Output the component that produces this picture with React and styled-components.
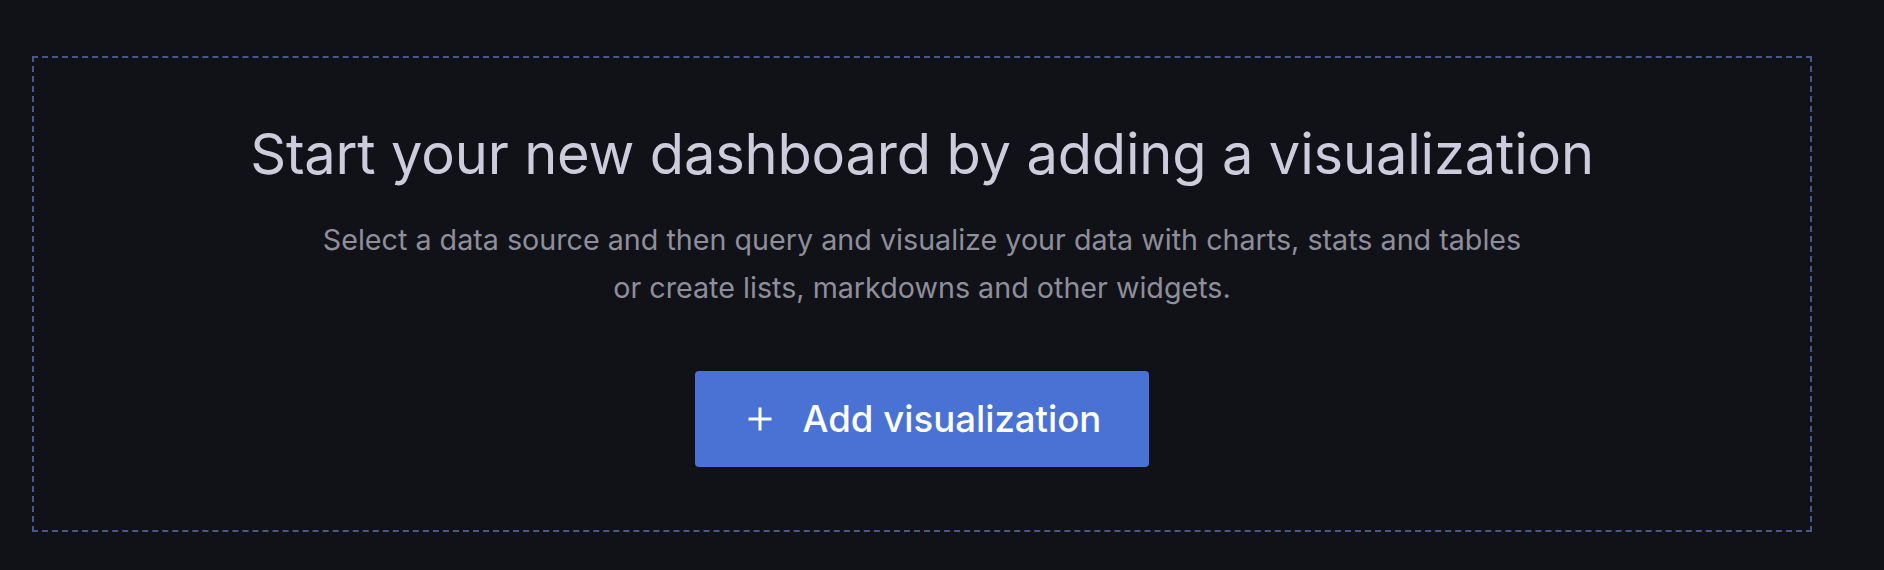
import React from 'react';
import styled, { createGlobalStyle } from 'styled-components';

const GlobalStyle = createGlobalStyle`
  html, body {
    margin: 0;
    padding: 0;
    background: #111217;
  }
  body {
    font-family: Inter, "Noto Sans", "Liberation Sans", sans-serif;
  }
`;

const Page = styled.div`
  box-sizing: border-box;
  width: 1884px;
  height: 570px;
  padding: 56px 72px 38px 32px;
  background: #111217;
`;

const DropZone = styled.div`
  box-sizing: border-box;
  height: 476px;
  border: 2px dashed #46598a;
  display: flex;
  flex-direction: column;
  align-items: center;
  justify-content: center;
  text-align: center;
`;

const Title = styled.h1`
  margin: 0;
  font-size: 56px;
  font-weight: 400;
  letter-spacing: -0.17px;
  line-height: 1.2;
  color: #ccccdc;
`;

const Subtitle = styled.p`
  margin: 27px 0 0;
  font-size: 28.7px;
  line-height: 48px;
  white-space: nowrap;
  color: #8e8e9c;
`;

const PrimaryButton = styled.button`
  margin-top: 59px;
  height: 96px;
  padding: 0 48px 0 53px;
  display: inline-flex;
  align-items: center;
  gap: 31px;
  border: none;
  border-radius: 4px;
  background: #4a71d4;
  color: #ffffff;
  font-family: inherit;
  font-size: 36.6px;
  font-weight: 500;
  cursor: pointer;
`;

const PlusIcon = () => (
  <svg width="24" height="24" viewBox="0 0 24 24" fill="none">
    <path d="M12 0.5v23M0.5 12h23" stroke="#ffffff" strokeWidth="3" />
  </svg>
);

export default function App() {
  return (
    <>
      <GlobalStyle />
      <Page>
        <DropZone>
          <Title>Start your new dashboard by adding a visualization</Title>
          <Subtitle>
            Select a data source and then query and visualize your data with charts, stats and tables
            <br />
            or create lists, markdowns and other widgets.
          </Subtitle>
          <PrimaryButton>
            <PlusIcon />
            Add visualization
          </PrimaryButton>
        </DropZone>
      </Page>
    </>
  );
}
